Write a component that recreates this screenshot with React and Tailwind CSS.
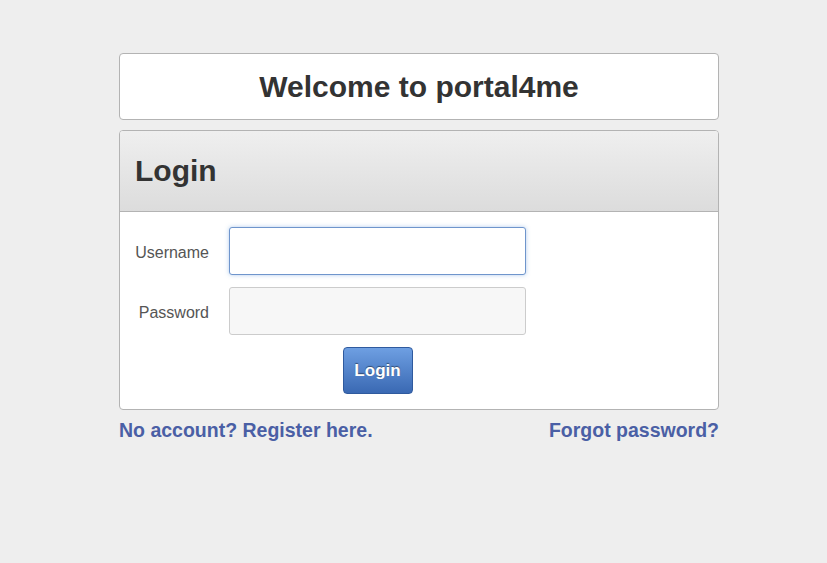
export default function App() {
  return (
    <div
      className="min-h-[563px] w-full bg-[#eeeeee] font-['Liberation_Sans',Arial,sans-serif]"
    >
      <div className="ml-[119px] w-[600px] pt-[53px]">
        {/* title card */}
        <div className="h-[67px] rounded-[4px] border border-[#b3b3b3] bg-white flex items-center justify-center">
          <h1 className="text-[30px] font-bold text-[#333333] leading-none">Welcome to portal4me</h1>
        </div>

        {/* login panel */}
        <div className="mt-[10px] rounded-[4px] border border-[#b3b3b3] bg-white overflow-hidden">
          <div className="h-[81px] border-b border-[#b3b3b3] bg-gradient-to-b from-[#efefef] to-[#dcdcdc] flex items-center px-[15px]">
            <h2 className="text-[30px] font-bold text-[#333333] leading-none">Login</h2>
          </div>

          <div className="pt-[15px] pb-[15px] pl-[15px]">
            <div className="flex items-center gap-[20px]">
              <label className="w-[74px] pt-[3px] text-right text-[16px] text-[#555555]">Username</label>
              <input
                type="text"
                className="h-[48px] w-[297px] rounded-[3px] border border-[#6f95cc] bg-white px-2 shadow-[0_0_4px_rgba(102,153,221,0.5)] outline-none"
              />
            </div>
            <div className="mt-[12px] flex items-center gap-[20px]">
              <label className="w-[74px] pt-[3px] text-right text-[16px] text-[#555555]">Password</label>
              <input
                type="password"
                className="h-[48px] w-[297px] rounded-[3px] border border-[#cccccc] bg-[#f7f7f7] px-2 outline-none"
              />
            </div>
            <div className="mt-[12px] flex">
              <div className="w-[94px]" />
              <div className="w-[297px] flex justify-center">
                <button className="h-[47px] w-[70px] rounded-[4px] border border-[#2f5a9e] bg-gradient-to-b from-[#6e9fe2] to-[#3a69b3] text-[17px] font-bold text-white [text-shadow:0_-1px_1px_rgba(0,0,0,0.45)]">
                  Login
                </button>
              </div>
            </div>
          </div>
        </div>

        {/* links */}
        <div className="mt-[6px] flex justify-between text-[19.5px] font-bold text-[#4a5fa5]">
          <a href="#">No account? Register here.</a>
          <a href="#">Forgot password?</a>
        </div>
      </div>
    </div>
  );
}
